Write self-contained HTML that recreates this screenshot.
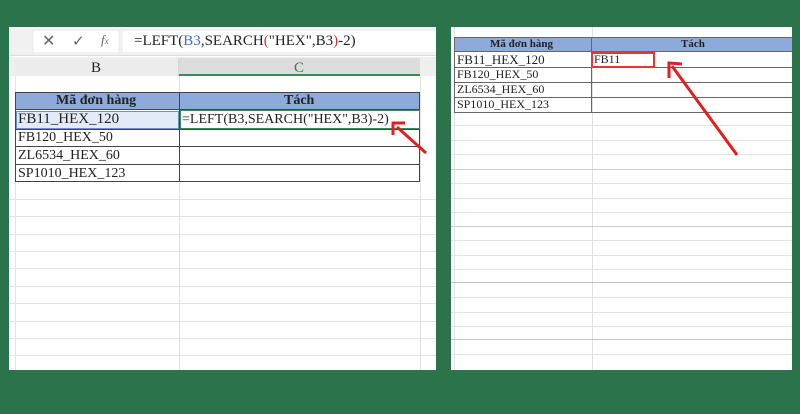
<!DOCTYPE html>
<html><head><meta charset="utf-8"><style>
*{margin:0;padding:0;box-sizing:border-box}
body{width:800px;height:414px;background:#2b744b;position:relative;overflow:hidden;font-family:"Liberation Serif",serif}
.a{position:absolute}
.hl{position:absolute;height:1px;background:#e2e2e2}
.vl{position:absolute;width:1px;background:#e2e2e2}
.t{position:absolute;white-space:nowrap;color:#222;line-height:1.15}
</style></head><body>
<!-- LEFT PANEL -->
<div class="a" style="left:9px;top:27px;width:427px;height:343px;background:#fff"></div>
<div class="a" style="left:9px;top:27px;width:427px;height:29px;background:#f1f1f1;border-bottom:1px solid #ddd"></div>
<div class="a" style="left:34px;top:31px;width:84px;height:21px;background:#fff"></div>
<div class="t" style="left:42px;top:31px;font:16px 'Liberation Sans',sans-serif;color:#666">✕</div>
<div class="t" style="left:72px;top:32px;font:15px 'Liberation Sans',sans-serif;color:#666">✓</div>
<div class="t" style="left:101px;top:32px;font:italic 13px 'Liberation Serif',serif;color:#666">f<span style="font-size:9px">x</span></div>
<div class="a" style="left:123px;top:31px;width:313px;height:21px;background:#fff"></div>
<div class="t" style="left:134px;top:33px;font-size:15px">=LEFT(<span style="color:#3a6fc4">B3</span>,SEARCH<span style="color:#c33">(</span>"HEX",B3<span style="color:#c33">)</span>-2)</div>
<div class="a" style="left:9px;top:57px;width:427px;height:19px;background:#efefef"></div>
<div class="a" style="left:15px;top:58px;width:164px;height:18px;background:#ececec;border-right:1px solid #d5d5d5"></div>
<div class="a" style="left:179px;top:58px;width:241px;height:18px;background:#dcdcdc;border-bottom:2px solid #3a8a5a"></div>
<div class="t" style="left:91px;top:60px;font-size:15px">B</div>
<div class="t" style="left:294px;top:60px;font-size:15px;color:#3a7a50">C</div>
<div class="vl" style="left:15px;top:76px;height:294px"></div>
<div class="vl" style="left:179px;top:76px;height:294px"></div>
<div class="vl" style="left:420px;top:76px;height:294px"></div>
<div class="hl" style="left:9px;top:199px;width:427px"></div>
<div class="hl" style="left:9px;top:216px;width:427px"></div>
<div class="hl" style="left:9px;top:234px;width:427px"></div>
<div class="hl" style="left:9px;top:251px;width:427px"></div>
<div class="hl" style="left:9px;top:268px;width:427px"></div>
<div class="hl" style="left:9px;top:286px;width:427px"></div>
<div class="hl" style="left:9px;top:303px;width:427px"></div>
<div class="hl" style="left:9px;top:321px;width:427px"></div>
<div class="hl" style="left:9px;top:338px;width:427px"></div>
<div class="hl" style="left:9px;top:355px;width:427px"></div>
<!-- left table -->
<div class="a" style="left:15px;top:92px;width:405px;height:90px;border:1px solid #444"></div>
<div class="a" style="left:16px;top:93px;width:403px;height:17px;background:#8eaadb;border-bottom:1px solid #444"></div>
<div class="a" style="left:179px;top:92px;width:1px;height:90px;background:#444"></div>
<div class="a" style="left:16px;top:111px;width:163px;height:18px;background:#e3ebf8;border:1px solid #6d8fcf"></div>
<div class="a" style="left:180px;top:110px;width:240px;height:19px;border:1px solid #3a8a5a"></div>
<div class="a" style="left:15px;top:129px;width:405px;height:1px;background:#444"></div>
<div class="a" style="left:15px;top:146px;width:405px;height:1px;background:#444"></div>
<div class="a" style="left:15px;top:164px;width:405px;height:1px;background:#444"></div>
<div class="t" style="left:56px;top:93px;font-weight:bold;font-size:14px">Mã đơn hàng</div>
<div class="t" style="left:284px;top:93px;font-weight:bold;font-size:14px">Tách</div>
<div class="t" style="left:18px;top:111px;font-size:15px">FB11_HEX_120</div>
<div class="t" style="left:18px;top:130px;font-size:14px">FB120_HEX_50</div>
<div class="t" style="left:18px;top:148px;font-size:14px">ZL6534_HEX_60</div>
<div class="t" style="left:18px;top:166px;font-size:14px">SP1010_HEX_123</div>
<div class="t" style="left:182px;top:112px;font-size:14px">=LEFT(B3,SEARCH("HEX",B3)-2)</div>
<svg class="a" style="left:385px;top:112px" width="45" height="45"><line x1="41" y1="41" x2="12" y2="15" stroke="#e41e1e" stroke-width="3"/><polyline points="8,23 8,11 20,11" fill="none" stroke="#e41e1e" stroke-width="3"/></svg>

<!-- RIGHT PANEL -->
<div class="a" style="left:451px;top:27px;width:341px;height:343px;background:#fff"></div>
<div class="vl" style="left:454px;top:27px;height:343px"></div>
<div class="vl" style="left:592px;top:27px;height:343px"></div>
<div class="hl" style="left:451px;top:125px;width:341px"></div>
<div class="hl" style="left:451px;top:140px;width:341px"></div>
<div class="hl" style="left:451px;top:154px;width:341px"></div>
<div class="hl" style="left:451px;top:169px;width:341px;background:#cfcfcf"></div>
<div class="hl" style="left:451px;top:183px;width:341px"></div>
<div class="hl" style="left:451px;top:198px;width:341px"></div>
<div class="hl" style="left:451px;top:212px;width:341px"></div>
<div class="hl" style="left:451px;top:226px;width:341px;background:#cfcfcf"></div>
<div class="hl" style="left:451px;top:240px;width:341px"></div>
<div class="hl" style="left:451px;top:255px;width:341px"></div>
<div class="hl" style="left:451px;top:269px;width:341px"></div>
<div class="hl" style="left:451px;top:282px;width:341px;background:#c4c4c4"></div>
<div class="hl" style="left:451px;top:297px;width:341px"></div>
<div class="hl" style="left:451px;top:312px;width:341px"></div>
<div class="hl" style="left:451px;top:326px;width:341px"></div>
<div class="hl" style="left:451px;top:339px;width:341px;background:#c4c4c4"></div>
<div class="hl" style="left:451px;top:354px;width:341px"></div>
<div class="a" style="left:454px;top:37px;width:338px;height:15px;background:#8eaadb;border-top:1px solid #666;border-bottom:1px solid #666"></div>
<div class="a" style="left:454px;top:37px;width:1px;height:75px;background:#666"></div>
<div class="a" style="left:591px;top:37px;width:1px;height:75px;background:#666"></div>
<div class="a" style="left:454px;top:67px;width:338px;height:1px;background:#666"></div>
<div class="a" style="left:454px;top:82px;width:338px;height:1px;background:#666"></div>
<div class="a" style="left:454px;top:97px;width:338px;height:1px;background:#666"></div>
<div class="a" style="left:454px;top:112px;width:338px;height:1px;background:#666"></div>
<div class="t" style="left:490px;top:38px;font-weight:bold;font-size:11px">Mã đơn hàng</div>
<div class="t" style="left:681px;top:38px;font-weight:bold;font-size:11px">Tách</div>
<div class="t" style="left:457px;top:53px;font-size:13px">FB11_HEX_120</div>
<div class="t" style="left:457px;top:68px;font-size:12px">FB120_HEX_50</div>
<div class="t" style="left:457px;top:83px;font-size:12px">ZL6534_HEX_60</div>
<div class="t" style="left:457px;top:98px;font-size:12px">SP1010_HEX_123</div>
<div class="a" style="left:591px;top:52px;width:64px;height:16px;border:2px solid #e33"></div>
<div class="t" style="left:594px;top:53px;font-size:12px">FB11</div>
<svg class="a" style="left:662px;top:58px" width="80" height="102"><line x1="75" y1="97" x2="10" y2="8" stroke="#e41e1e" stroke-width="3"/><polyline points="7,20 7,5 20,6" fill="none" stroke="#e41e1e" stroke-width="3"/></svg>
</body></html>
